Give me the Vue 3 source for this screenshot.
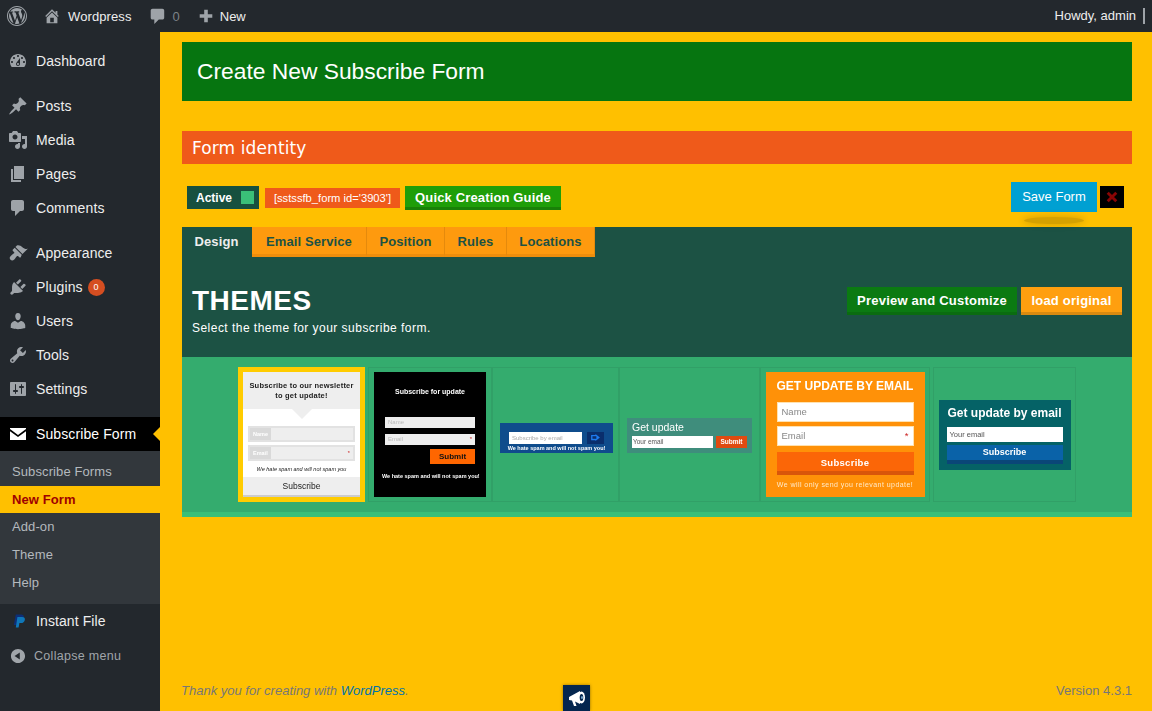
<script setup>
const topMenu = [
  [
    { label: 'Dashboard', icon: 'M3.76 16h12.48c1.1-1.37 1.76-3.11 1.76-5 0-4.42-3.58-8-8-8s-8 3.58-8 8c0 1.89.66 3.63 1.76 5zM10 4c.55 0 1 .45 1 1s-.45 1-1 1-1-.45-1-1 .45-1 1-1zM6 6c.55 0 1 .45 1 1s-.45 1-1 1-1-.45-1-1 .45-1 1-1zm8 0c.55 0 1 .45 1 1s-.45 1-1 1-1-.45-1-1 .45-1 1-1zm-5.37 5.55L12 7v6c0 1.1-.9 2-2 2s-2-.9-2-2c0-.57.24-1.08.63-1.45zM4 10c.55 0 1 .45 1 1s-.45 1-1 1-1-.45-1-1 .45-1 1-1zm12 0c.55 0 1 .45 1 1s-.45 1-1 1-1-.45-1-1 .45-1 1-1zm-5 3c0-.55-.45-1-1-1s-1 .45-1 1 .45 1 1 1 1-.45 1-1z' }
  ],
  [
    { label: 'Posts', icon: 'M10.44 3.02l1.82-1.82 6.36 6.35-1.83 1.82c-1.05-.68-2.48-.57-3.41.36l-.75.75c-.92.93-1.04 2.35-.35 3.41l-1.83 1.82-2.41-2.41-2.8 2.79c-.42.42-3.38 2.71-3.8 2.29s1.86-3.39 2.28-3.81l2.79-2.79L4.1 9.36l1.83-1.82c1.05.69 2.48.57 3.4-.36l.75-.75c.93-.92 1.05-2.35.36-3.41z' },
    { label: 'Media', icon: 'M13 11V4c0-.55-.45-1-1-1h-1.67L9 1H5L3.67 3H2c-.55 0-1 .45-1 1v7c0 .55.45 1 1 1h10c.55 0 1-.45 1-1zM7 4.5c1.38 0 2.5 1.12 2.5 2.5S8.38 9.5 7 9.5 4.5 8.38 4.5 7 5.62 4.5 7 4.5zM14 6h5v10.5c0 1.38-1.12 2.5-2.5 2.5S14 17.88 14 16.5s1.12-2.5 2.5-2.5c.17 0 .34.02.5.05V9h-3V6zm-4 8.05V13h2v3.5c0 1.38-1.12 2.5-2.5 2.5S7 17.88 7 16.5 8.12 14 9.5 14c.17 0 .34.02.5.05z' },
    { label: 'Pages', icon: 'M6 15V2h10v13H6zm-1 1h8v2H3V5h2v11z' },
    { label: 'Comments', icon: 'M5 2h9c1.1 0 2 .9 2 2v7c0 1.1-.9 2-2 2h-2l-5 5v-5H5c-1.1 0-2-.9-2-2V4c0-1.1.9-2 2-2z' }
  ],
  [
    { label: 'Appearance', icon: 'M14.48 11.06L7.41 3.99l1.5-1.5c.5-.56 2.3-.47 3.51.32 1.21.8 1.43 1.28 2.91 2.1 1.18.64 2.45 1.26 4.45.85zm-.71.71L6.7 4.7 4.93 6.47c-.39.39-.39 1.02 0 1.41l1.06 1.06c.39.39.39 1.03 0 1.42-.6.6-1.43 1.11-2.21 1.69-.35.26-.7.53-1.01.84-1.43 1.43-1.4 2.7-.29 3.82 1.12 1.11 2.39 1.14 3.82-.29.31-.31.58-.66.84-1.01.58-.78 1.09-1.61 1.69-2.21.39-.39 1.03-.39 1.42 0l1.06 1.06c.39.39 1.02.39 1.41 0z' },
    { label: 'Plugins', badge: '0', icon: 'M13.11 4.36L9.87 7.6 8 5.73l3.24-3.24c.35-.34 1.05-.2 1.56.32.52.51.66 1.21.31 1.55zm-8 1.77l.91-1.12 9.01 9.01-1.19.84c-.71.71-2.63 1.16-3.82 1.16H6.14L4.9 17.26c-.59.59-1.54.59-2.12 0-.59-.58-.59-1.53 0-2.12l1.24-1.24v-3.88c0-1.13.4-3.19 1.09-3.89zm7.26 3.97l3.24-3.24c.34-.35 1.04-.21 1.55.31.52.51.66 1.21.31 1.55l-3.24 3.25z' },
    { label: 'Users', icon: 'M10 9.25c-2.27 0-2.73-3.44-2.73-3.44C7 4.02 7.82 2 9.97 2c2.16 0 2.98 2.02 2.71 3.81 0 0-.41 3.44-2.68 3.44zm0 2.57L12.72 10c2.39 0 4.52 2.33 4.52 4.53v2.49s-3.65 1.13-7.24 1.13c-3.65 0-7.24-1.13-7.24-1.13v-2.49c0-2.25 1.94-4.48 4.47-4.48z' },
    { label: 'Tools', icon: 'M16.68 9.77c-1.34 1.34-3.3 1.67-4.95.99l-5.41 6.52c-.99.99-2.59.99-3.58 0s-.99-2.59 0-3.57l6.52-5.42c-.68-1.65-.35-3.61.99-4.95 1.28-1.28 3.12-1.62 4.72-1.06l-2.89 2.89 2.82 2.82 2.86-2.87c.53 1.58.18 3.39-1.08 4.65zM3.81 16.21c.4.39 1.04.39 1.43 0 .4-.4.4-1.04 0-1.43-.39-.4-1.03-.4-1.43 0-.39.39-.39 1.03 0 1.43z' },
    { label: 'Settings', icon: 'M18 16V4c0-.55-.45-1-1-1H3c-.55 0-1 .45-1 1v12c0 .55.45 1 1 1h14c.55 0 1-.45 1-1zM8 11h1c.55 0 1 .45 1 1s-.45 1-1 1H8v1.5c0 .28-.22.5-.5.5s-.5-.22-.5-.5V13H6c-.55 0-1-.45-1-1s.45-1 1-1h1V5.5c0-.28.22-.5.5-.5s.5.22.5.5V11zm5-2h-1c-.55 0-1-.45-1-1s.45-1 1-1h1V5.5c0-.28.22-.5.5-.5s.5.22.5.5V7h1c.55 0 1 .45 1 1s-.45 1-1 1h-1v5.5c0 .28-.22.5-.5.5s-.5-.22-.5-.5V9z' }
  ]
]

const subMenu = ['Subscribe Forms', 'New Form', 'Add-on', 'Theme', 'Help']
const tabs = ['Design', 'Email Service', 'Position', 'Rules', 'Locations']
const wpLogo = 'M20 10c0-5.52-4.48-10-10-10S0 4.48 0 10s4.48 10 10 10 10-4.48 10-10zM10 1.01c4.97 0 8.99 4.02 8.99 8.99s-4.02 8.99-8.99 8.99S1.01 14.97 1.01 10 5.03 1.01 10 1.01zM8.01 14.82L4.96 6.61c.49-.03 1.05-.08 1.05-.08.43-.05.38-1.01-.06-.99 0 0-1.29.1-2.13.1-.15 0-.33 0-.52-.01 1.44-2.17 3.9-3.6 6.7-3.6 2.09 0 3.99.79 5.41 2.09-.6-.08-1.45.35-1.45 1.42 0 .66.38 1.22.79 1.88.31.54.5 1.22.5 2.21 0 1.34-1.27 4.48-1.27 4.48l-2.71-7.5c.48-.03.75-.16.75-.16.43-.05.38-1.1-.05-1.08 0 0-1.3.11-2.14.11-.78 0-2.11-.11-2.11-.11-.43-.02-.48 1.06-.05 1.08l.84.08 1.12 3.04zm6.02 2.15L16.64 10s.67-1.69.39-3.81c.63 1.14.94 2.42.94 3.81 0 2.96-1.56 5.58-3.94 6.97zM2.68 6.77L6.5 17.25c-2.67-1.3-4.47-4.08-4.47-7.25 0-1.16.2-2.23.65-3.23zm7.45 4.53l2.29 6.25c-.75.27-1.57.42-2.42.42-.72 0-1.41-.11-2.06-.3z'
</script>

<template>
  <div class="page">
    <header class="adminbar">
      <div class="bar-left">
        <svg class="bar-logo" viewBox="0 0 20 20"><path :d="wpLogo" /></svg>
        <svg class="bar-home" viewBox="0 0 20 20"><path d="M16 8.5l1.53 1.53-1.06 1.06L10 4.62l-6.47 6.47-1.06-1.06L10 2.5l4 4v-2h2v4zm-6-2.46l6 5.99V18H4v-5.97zM12 17v-5H8v5h4z" /></svg>
        <span class="bar-site">Wordpress</span>
        <svg class="bar-comment" viewBox="0 0 20 20"><path d="M5 2h11c1.1 0 2 .9 2 2v8c0 1.1-.9 2-2 2h-4l-5 5v-5H5c-1.1 0-2-.9-2-2V4c0-1.1.9-2 2-2z" /></svg>
        <span class="bar-count">0</span>
        <svg class="bar-plus" viewBox="0 0 20 20"><path d="M17 8v4h-5v5H8v-5H3V8h5V3h4v5h5z" /></svg>
        <span class="bar-new">New</span>
      </div>
      <div class="bar-right">Howdy, admin</div>
    </header>

    <div class="body">
      <aside class="sidebar">
        <ul v-for="(group, i) in topMenu" :key="i" class="menu-group">
          <li v-for="item in group" :key="item.label" class="menu-item">
            <svg class="menu-icon" viewBox="0 0 20 20"><path :d="item.icon" /></svg>
            <span>{{ item.label }}</span>
            <span v-if="item.badge" class="badge">{{ item.badge }}</span>
          </li>
        </ul>

        <div class="menu-item current">
          <svg class="mail-icon" viewBox="0 0 16 12">
            <rect width="16" height="12" fill="#fff" />
            <path d="M0 1l8 6 8-6v2.2L8 9 0 3.2z" fill="#000" />
          </svg>
          <span>Subscribe Form</span>
        </div>
        <ul class="submenu">
          <li
            v-for="sub in subMenu"
            :key="sub"
            class="sub-item"
            :class="{ active: sub === 'New Form' }"
          >{{ sub }}</li>
        </ul>

        <div class="menu-item">
          <svg class="menu-icon paypal" viewBox="0 0 20 20">
            <path d="M6 2h6.5c2.6 0 4 1.400 3.500 3.800-.5 2.600-2.500 4-5 4H8.500L7.500 15H3.500z" />
            <path d="M8 5h6c2.500 0 3.800 1.400 3.300 3.700-.5 2.500-2.400 3.900-4.800 3.900h-2L9.500 18H6z" />
          </svg>
          <span>Instant File</span>
        </div>
        <div class="collapse">
          <svg class="collapse-icon" viewBox="0 0 20 20"><path d="M10 2.160c4.330 0 7.840 3.510 7.840 7.840s-3.510 7.840-7.840 7.840S2.160 14.330 2.160 10 5.710 2.160 10 2.160zm2 11.720V6.120L6.180 9.970z" /></svg>
          <span>Collapse menu</span>
        </div>
      </aside>

      <main class="content">
        <h1 class="page-title">Create New Subscribe Form</h1>
        <h2 class="section-title">Form identity</h2>

        <div class="toolbar">
          <div class="tool-left">
            <div class="status">Active <i class="status-box"></i></div>
            <code class="shortcode">[sstssfb_form id='3903']</code>
            <a class="guide-btn">Quick Creation Guide</a>
          </div>
          <div class="tool-right">
            <a class="save-btn">Save Form</a>
            <a class="close-btn">
              <svg viewBox="0 0 14 14"><path d="M2 2l10 10M12 2L2 12" stroke="#8a0505" stroke-width="3.400" /></svg>
            </a>
          </div>
        </div>

        <section class="panel">
          <nav class="tabs">
            <a
              v-for="(tab, i) in tabs"
              :key="tab"
              class="tab"
              :class="{ selected: i === 0 }"
            >{{ tab }}</a>
          </nav>

          <div class="themes-head">
            <div>
              <div class="themes-title">THEMES</div>
              <p class="themes-sub">Select the theme for your subscribe form.</p>
            </div>
            <div class="themes-actions">
              <a class="preview-btn">Preview and Customize</a>
              <a class="load-btn">load original</a>
            </div>
          </div>

          <div class="themes-list">
            <div class="card card-1">
              <div class="t1">
                <div class="t1-head">Subscribe to our newsletter to get update!</div>
                <div class="t1-field"><b>Name</b></div>
                <div class="t1-field"><b>Email</b><i>*</i></div>
                <p class="t1-note">We hate spam and will not spam you</p>
                <div class="t1-btn">Subscribe</div>
              </div>
            </div>
            <div class="card card-2">
              <div class="t2">
                <div class="t2-title">Subscribe for update</div>
                <div class="t2-input">Name</div>
                <div class="t2-input">Email<i>*</i></div>
                <div class="t2-btn">Submit</div>
                <p class="t2-note">We hate spam and will not spam you!</p>
              </div>
            </div>
            <div class="card card-3">
              <div class="t3">
                <div class="t3-row">
                  <div class="t3-input">Subscribe by email</div>
                  <div class="t3-btn">
                    <svg viewBox="0 0 10 8"><path d="M0 1h5V0l5 4-5 4V7H0z" fill="#1e7bf0" /><path d="M1.500 2.500h4.500v3H1.500z" fill="#0a2e6c" /></svg>
                  </div>
                </div>
                <p class="t3-note">We hate spam and will not spam you!</p>
              </div>
            </div>
            <div class="card card-4">
              <div class="t4">
                <div class="t4-title">Get update</div>
                <div class="t4-row">
                  <div class="t4-input">Your email</div>
                  <div class="t4-btn">Submit</div>
                </div>
              </div>
            </div>
            <div class="card card-5">
              <div class="t5">
                <div class="t5-title">GET UPDATE BY EMAIL</div>
                <div class="t5-input">Name</div>
                <div class="t5-input">Email<i>*</i></div>
                <div class="t5-btn">Subscribe</div>
                <p class="t5-note">We will only send you relevant update!</p>
              </div>
            </div>
            <div class="card card-6">
              <div class="t6">
                <div class="t6-title">Get update by email</div>
                <div class="t6-input">Your email</div>
                <div class="t6-btn">Subscribe</div>
              </div>
            </div>
          </div>
        </section>

        <footer class="footer">
          <span class="thanks">Thank you for creating with <a>WordPress</a>.</span>
          <span class="version">Version 4.3.1</span>
        </footer>

        <a class="promo">
          <svg viewBox="0 0 20 20">
            <path d="M2 9l11-6v13L8 13.500 9.500 18H7L5 12.500 2 12z" fill="#fff" />
            <ellipse cx="14.500" cy="9.500" rx="3.500" ry="6" fill="#fff" />
            <ellipse cx="14.500" cy="9.500" rx="1.800" ry="3.600" fill="#04264f" />
            <ellipse cx="15" cy="9.500" rx=".8" ry="1.500" fill="#8fc4e8" />
          </svg>
        </a>
      </main>
    </div>
  </div>
</template>

<style>
html,
body {
  margin: 0;
  padding: 0;
}
</style>

<style scoped>
.page {
  width: 100%;
  height: 711px;
  overflow: hidden;
  display: flex;
  flex-direction: column;
  font-family: "Liberation Sans", Arial, sans-serif;
  font-size: 13px;
  color: #fff;
}

ul {
  list-style: none;
  margin: 0;
  padding: 0;
}

p,
h1,
h2 {
  margin: 0;
}

/* admin bar */
.adminbar {
  height: 32px;
  flex: none;
  background: #23282d;
  display: flex;
  align-items: center;
  justify-content: space-between;
  color: #eee;
  font-size: 13px;
}

.bar-left {
  display: flex;
  align-items: center;
}

.adminbar svg path {
  fill: #9ea3a8;
}

.bar-logo {
  width: 20px;
  height: 20px;
  margin-left: 7px;
}

.bar-home {
  width: 18px;
  height: 18px;
  margin-left: 16px;
}

.bar-site {
  margin-left: 7px;
  letter-spacing: 0.1px;
}

.bar-comment {
  width: 18px;
  height: 18px;
  margin-left: 16px;
}

.bar-count {
  margin-left: 7px;
  color: #7d8287;
}

.bar-plus {
  width: 18px;
  height: 18px;
  margin-left: 17px;
}

.bar-new {
  margin-left: 5px;
}

.bar-right {
  padding-right: 7px;
  border-right: 2px solid #9ea3a8;
  line-height: 16px;
  margin-right: 7px;
}

/* sidebar */
.body {
  flex: 1;
  display: flex;
  min-height: 0;
}

.sidebar {
  width: 160px;
  flex: none;
  background: #23282d;
  padding-top: 12px;
  box-sizing: border-box;
}

.menu-group {
  margin-bottom: 11px;
}

.menu-item {
  height: 34px;
  display: flex;
  align-items: center;
  font-size: 14px;
  letter-spacing: 0.1px;
  color: #eee;
  position: relative;
  padding-left: 8px;
}

.menu-icon {
  width: 20px;
  height: 20px;
  margin-right: 8px;
  flex: none;
}

.menu-icon path {
  fill: #9ea3a8;
}

.menu-icon.paypal {
  width: 16px;
  height: 16px;
  margin-left: 3px;
  margin-right: 9px;
}

.menu-icon.paypal path:first-child {
  fill: #0c2f78;
}

.menu-icon.paypal path:last-child {
  fill: #0f77b8;
}

.badge {
  margin-left: 5px;
  width: 17px;
  height: 17px;
  border-radius: 50%;
  background: #d54e21;
  color: #fff;
  font-size: 9px;
  line-height: 17px;
  text-align: center;
  letter-spacing: 0;
}

.current {
  background: #000;
  color: #fff;
}

.current::after {
  content: "";
  position: absolute;
  right: 0;
  top: 50%;
  margin-top: -7px;
  border: 7px solid transparent;
  border-right-color: #ffc000;
  border-left-width: 0;
}

.mail-icon {
  width: 16px;
  height: 12px;
  margin: 0 10px 0 2px;
}

.submenu {
  background: #32373c;
  padding: 7px 0;
}

.sub-item {
  height: 28px;
  line-height: 28px;
  padding-left: 12px;
  font-size: 13px;
  letter-spacing: 0.1px;
  color: #b4b9be;
}

.sub-item.active {
  background: #ffc000;
  color: #a00000;
  font-weight: bold;
  height: 27px;
  line-height: 27px;
}

.collapse {
  height: 34px;
  padding-top: 1px;
  box-sizing: border-box;
  display: flex;
  align-items: center;
  padding-left: 9px;
  font-size: 12.500px;
  letter-spacing: 0.3px;
  color: #a0a5aa;
}

.collapse-icon {
  width: 18px;
  height: 18px;
  margin-right: 7px;
}

.collapse-icon path {
  fill: #a0a5aa;
}

/* main */
.content {
  flex: 1;
  min-width: 0;
  background: #ffc000;
  padding: 10px 20px 0 22px;
  display: flex;
  flex-direction: column;
  position: relative;
}

.page-title {
  height: 59px;
  line-height: 59px;
  background: #067510;
  padding-left: 15px;
  font-size: 22.800px;
  font-weight: normal;
}

.section-title {
  margin-top: 30px;
  height: 33px;
  line-height: 34px;
  background: #ef5a1a;
  padding-left: 10px;
  font-family: "DejaVu Sans", sans-serif;
  font-size: 17px;
  letter-spacing: 0.1px;
  font-weight: normal;
}

.toolbar {
  display: flex;
  justify-content: space-between;
  height: 63px;
  padding: 18px 8px 0 5px;
  box-sizing: border-box;
}

.tool-left {
  display: flex;
  align-items: flex-start;
  padding-top: 4px;
}

.status {
  width: 72px;
  height: 23px;
  box-sizing: border-box;
  background: #17503f;
  padding-left: 9px;
  font-size: 12px;
  font-weight: bold;
  line-height: 24px;
  position: relative;
}

.status-box {
  position: absolute;
  right: 5px;
  top: 5px;
  width: 13px;
  height: 13px;
  background: #3abf78;
}

.shortcode {
  margin: 2px 5px 0 6px;
  width: 135px;
  height: 20px;
  box-sizing: border-box;
  background: #ef5a1a;
  font-family: "Liberation Sans", Arial, sans-serif;
  font-size: 11.200px;
  line-height: 20px;
  text-align: center;
  color: #fff;
}

.guide-btn {
  margin-top: 0;
  width: 156px;
  height: 24px;
  box-sizing: border-box;
  background: #1f9e09;
  border-bottom: 3px solid #198008;
  text-align: center;
  font-size: 13px;
  font-weight: bold;
  letter-spacing: 0.15px;
  line-height: 24px;
}

.tool-right {
  display: flex;
  gap: 3px;
  align-items: flex-start;
}

.save-btn {
  width: 86px;
  height: 30px;
  background: #00a0d2;
  text-align: center;
  font-size: 13px;
  line-height: 29px;
  position: relative;
}

.save-btn::after {
  content: "";
  position: absolute;
  left: 13px;
  right: 13px;
  bottom: -12px;
  height: 7px;
  border-radius: 50%;
  background: rgba(0, 0, 0, 0.16);
  box-shadow: 0 0 6px 2px rgba(0, 0, 0, 0.12);
}

.close-btn {
  margin-top: 4px;
  width: 24px;
  height: 22px;
  background: #000;
  display: flex;
  align-items: center;
  justify-content: center;
}

.close-btn svg {
  width: 12px;
  height: 12px;
}

.panel {
  background: #1c5244;
}

.tabs {
  display: flex;
  height: 30px;
}

.tab {
  box-sizing: border-box;
  height: 30px;
  background: #fe9a0e;
  border-bottom: 3px solid #ee8e0c;
  border-right: 1px solid #e58a0c;
  color: #1c5244;
  font-size: 13px;
  font-weight: bold;
  letter-spacing: 0.1px;
  line-height: 30px;
  text-align: center;
}

.tab:nth-child(1) {
  width: 70px;
}

.tab:nth-child(2) {
  width: 115px;
}

.tab:nth-child(3) {
  width: 78px;
}

.tab:nth-child(4) {
  width: 62px;
}

.tab:nth-child(5) {
  width: 88px;
}

.tab.selected {
  background: #1c5244;
  border-color: #1c5244;
  color: #eee;
}

.themes-head {
  height: 100px;
  box-sizing: border-box;
  padding: 30px 10px 0;
  display: flex;
  justify-content: space-between;
  align-items: flex-start;
}

.themes-title {
  font-size: 28px;
  font-weight: bold;
  letter-spacing: 0.5px;
  line-height: 27px;
}

.themes-sub {
  margin-top: 7px;
  font-size: 12px;
  letter-spacing: 0.47px;
  line-height: 15px;
}

.themes-actions {
  display: flex;
  gap: 4px;
}

.preview-btn,
.load-btn {
  box-sizing: border-box;
  height: 28px;
  font-size: 13px;
  font-weight: bold;
  letter-spacing: 0.22px;
  line-height: 27px;
  text-align: center;
}

.preview-btn {
  width: 170px;
  background: #0b7a12;
  border-bottom: 3px solid #0a6c10;
}

.load-btn {
  width: 101px;
  background: #ff9f0f;
  border-bottom: 3px solid #d98a10;
}

/* theme thumbnails */
.themes-list {
  height: 160px;
  box-sizing: border-box;
  background: #34ac6e;
  border-bottom: 5px solid #3abf78;
  padding: 10px 0 0 56px;
  display: flex;
}

.card {
  height: 135px;
  box-sizing: border-box;
  border: 1px solid #31a067;
  display: flex;
  align-items: center;
  justify-content: center;
}

.card i {
  font-style: normal;
  color: #c22;
  margin-left: auto;
}

.card > div {
  filter: blur(0.4px);
}

.card-1 {
  width: 127px;
  background: #ffcc00;
  border: none;
  margin-right: 3px;
}

.card-2 {
  width: 124px;
}

.card-3 {
  width: 127px;
}

.card-4 {
  width: 141px;
}

.card-5 {
  width: 170px;
}

.card-6 {
  width: 143px;
  margin-left: 3px;
}

.t1 {
  width: 117px;
  height: 125px;
  background: #fff;
  color: #222;
  display: flex;
  flex-direction: column;
  align-items: center;
  position: relative;
}

.t1-head {
  width: 100%;
  height: 37px;
  box-sizing: border-box;
  padding: 9px 4px 0;
  background: #eee;
  font-size: 7.500px;
  font-weight: bold;
  line-height: 9.500px;
  text-align: center;
  letter-spacing: 0.2px;
  position: relative;
}

.t1-head::after {
  content: "";
  position: absolute;
  left: 50%;
  bottom: -10px;
  margin-left: -10px;
  border-style: solid;
  border-width: 10px 10px 0;
  border-color: #eee transparent transparent;
}

.t1-field {
  width: 107px;
  height: 16px;
  box-sizing: border-box;
  margin-top: 3px;
  border: 2px solid #e2e2e2;
  background: #eee;
  display: flex;
  align-items: center;
  font-size: 5.500px;
  padding-right: 3px;
}

.t1-field:nth-child(2) {
  margin-top: 17px;
}

.t1-field b {
  width: 21px;
  height: 100%;
  background: #d9d9d9;
  color: #fff;
  line-height: 12px;
  padding-left: 3px;
  box-sizing: border-box;
}

.t1-note {
  margin-top: 5px;
  font-size: 5.500px;
  font-style: italic;
  white-space: nowrap;
}

.t1-btn {
  margin-top: auto;
  width: 100%;
  height: 20px;
  box-sizing: border-box;
  background: #eee;
  border-bottom: 2px solid #ccc;
  font-size: 8.500px;
  line-height: 19px;
  text-align: center;
  color: #222;
}

.t2 {
  width: 112px;
  height: 125px;
  box-sizing: border-box;
  background: #000;
  padding: 15px 11px 0;
  color: #fff;
  display: flex;
  flex-direction: column;
}

.t2-title {
  font-size: 7px;
  font-weight: bold;
  text-align: center;
  line-height: 10px;
  margin-bottom: 20px;
}

.t2-input {
  height: 11px;
  margin-bottom: 6px;
  background: #eee;
  color: #bbb;
  font-size: 6px;
  line-height: 11px;
  padding: 0 3px;
  display: flex;
}

.t2-input + .t2-input {
  margin-bottom: 4px;
}

.t2-btn {
  align-self: flex-end;
  width: 45px;
  height: 15px;
  background: #ff6600;
  color: #111;
  font-size: 8px;
  font-weight: bold;
  line-height: 15px;
  text-align: center;
}

.t2-note {
  margin: 8px -3px 0;
  font-size: 5.500px;
  font-weight: bold;
  line-height: 8px;
  text-align: center;
  white-space: nowrap;
}

.t3 {
  width: 113px;
  height: 30px;
  margin: 6px 0 0 2px;
  box-sizing: border-box;
  background: #0f4c8c;
  padding: 9px 9px 0;
}

.t3-row {
  display: flex;
  justify-content: space-between;
}

.t3-input {
  width: 73px;
  height: 12px;
  background: #fff;
  color: #aaa;
  font-size: 6px;
  line-height: 12px;
  padding-left: 3px;
  box-sizing: border-box;
  white-space: nowrap;
}

.t3-btn {
  width: 17px;
  height: 12px;
  background: #0a2e6c;
  display: flex;
  align-items: center;
  justify-content: center;
}

.t3-btn svg {
  width: 9px;
  height: 7px;
}

.t3-note {
  font-size: 5.500px;
  font-weight: bold;
  line-height: 8px;
  white-space: nowrap;
  text-align: center;
  margin: 0 -5px;
}

.t4 {
  width: 125px;
  height: 35px;
  margin-top: 2px;
  box-sizing: border-box;
  background: #3f8d7c;
  padding: 3px 5px 0;
}

.t4-title {
  font-size: 10.500px;
  line-height: 13px;
  margin-bottom: 2px;
}

.t4-row {
  display: flex;
  justify-content: space-between;
}

.t4-input {
  width: 81px;
  height: 12px;
  background: #fff;
  color: #555;
  font-size: 6.500px;
  line-height: 12px;
  padding-left: 1px;
  box-sizing: border-box;
}

.t4-btn {
  width: 31px;
  height: 12px;
  background: #e04a10;
  font-size: 6.500px;
  font-weight: bold;
  line-height: 12px;
  text-align: center;
}

.t5 {
  width: 159px;
  height: 125px;
  box-sizing: border-box;
  background: #ff9108;
  padding: 7px 11px 0;
}

.t5-title {
  font-size: 12px;
  font-weight: bold;
  line-height: 14px;
  margin-bottom: 9px;
  white-space: nowrap;
}

.t5-input {
  height: 20px;
  box-sizing: border-box;
  background: #fff;
  border: 1px solid #ffe2b0;
  margin-bottom: 4px;
  color: #888;
  font-size: 9.500px;
  line-height: 18px;
  padding: 0 4px;
  display: flex;
}

.t5-btn {
  margin-top: 6px;
  height: 23px;
  box-sizing: border-box;
  background: #fb6607;
  border-bottom: 4px solid #d9550a;
  font-size: 9.500px;
  font-weight: bold;
  letter-spacing: 0.3px;
  line-height: 21px;
  text-align: center;
}

.t5-note {
  margin: 6px -2px 0;
  font-size: 7px;
  letter-spacing: 0.45px;
  line-height: 8px;
  text-align: center;
  white-space: nowrap;
  color: #ffe9c8;
}

.t6 {
  width: 132px;
  height: 70px;
  box-sizing: border-box;
  background: #056266;
  padding: 6px 8px 0;
}

.t6-title {
  font-size: 12px;
  font-weight: bold;
  line-height: 14px;
  margin-bottom: 7px;
  text-align: center;
  white-space: nowrap;
}

.t6-input {
  height: 15px;
  background: #fff;
  color: #555;
  font-size: 7.500px;
  line-height: 15px;
  padding-left: 3px;
}

.t6-btn {
  margin-top: 3px;
  height: 19px;
  box-sizing: border-box;
  background: #0a62a8;
  border-bottom: 4px solid #0a4678;
  font-size: 9px;
  font-weight: bold;
  line-height: 15px;
  text-align: center;
}

/* footer */
.footer {
  margin-top: auto;
  height: 30px;
  display: flex;
  justify-content: space-between;
  color: #777;
  font-size: 13px;
  line-height: 20px;
  margin-left: -1px;
}

.thanks {
  font-style: italic;
}

.thanks a {
  color: #0073aa;
}

.promo {
  position: absolute;
  left: 403px;
  bottom: 0;
  width: 27px;
  height: 26px;
  background: #04264f;
  box-shadow: 0 0 3px rgba(0, 0, 0, 0.4);
  display: flex;
  align-items: center;
  justify-content: center;
}

.promo svg {
  width: 20px;
  height: 20px;
}
</style>
